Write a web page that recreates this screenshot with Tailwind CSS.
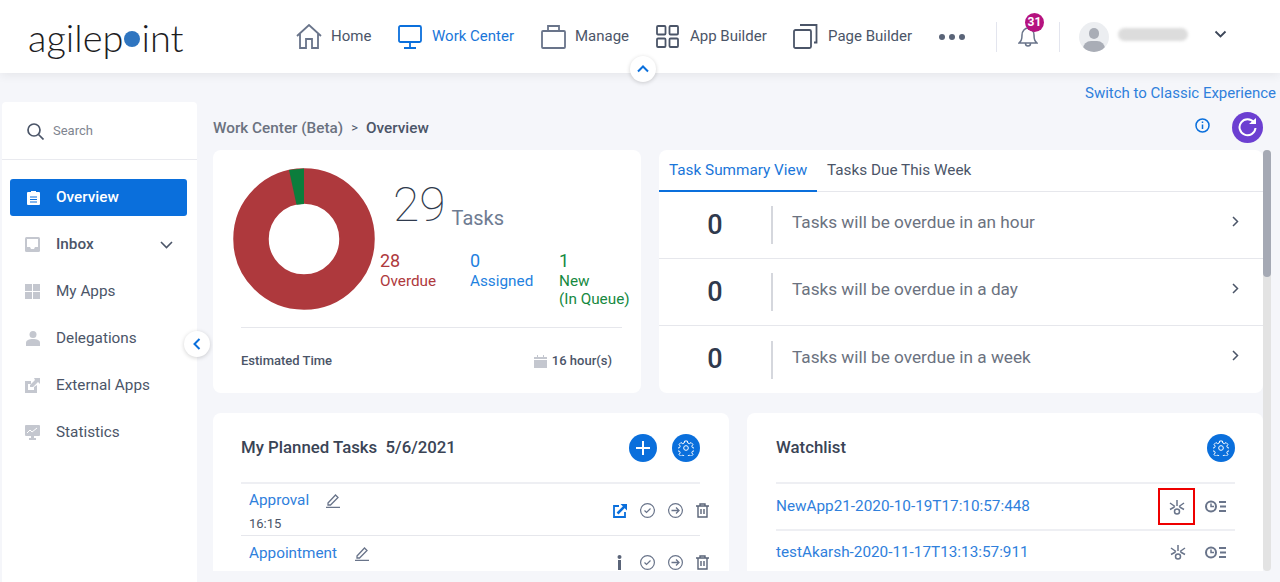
<!DOCTYPE html>
<html lang="en">
<head>
  <meta charset="UTF-8" />
  <title>Work Center</title>
  <script src="https://cdn.jsdelivr.net/npm/@tailwindcss/browser@4"></script>
</head>
<body class="bg-[#f5f6fa] h-[582px] overflow-hidden font-[Roboto,sans-serif] text-[#4b5568]">

  <!-- top nav -->
  <header class="relative h-[73px] bg-white shadow-[0_2px_10px_rgba(0,0,0,0.07)] flex items-center text-[15px]">
    <div class="ml-[28px] w-[268px] flex items-center font-['Lato',sans-serif] font-light text-[38px] leading-none text-[#1d1d1f]">
      <span>agilep</span><span class="w-[16px] h-[16px] rounded-full bg-[#2f75c0] mt-[5px] ml-[1px] mr-[1px]"></span><span>int</span>
    </div>
    <svg class="w-[26px] h-[25px] mr-[9px]" viewBox="0 0 26 25" fill="none" stroke="#69748a" stroke-width="1.8"><path d="M1 12 13 1l12 11M4 10v14h6v-9h6v9h6V10"/></svg>
    <span class="w-[67px]">Home</span>
    <svg class="w-[24px] h-[24px] mr-[10px]" viewBox="0 0 24 24" fill="none" stroke="#0a6fdc" stroke-width="1.8"><rect x="1" y="1" width="22" height="16" rx="1.5"/><path d="M12 17v5M6 23h12"/></svg>
    <span class="w-[109px] text-[#1a76d9]">Work Center</span>
    <svg class="w-[25px] h-[24px] mr-[9px]" viewBox="0 0 25 24" fill="none" stroke="#69748a" stroke-width="1.8"><rect x="1" y="6" width="23" height="17" rx="1"/><path d="M7 6V1h11v5"/></svg>
    <span class="w-[81px]">Manage</span>
    <svg class="w-[23px] h-[23px] mr-[11px]" viewBox="0 0 23 23" fill="none" stroke="#4b5568" stroke-width="1.8"><rect x="1" y="1" width="8.5" height="8.5" rx="1"/><rect x="13.5" y="1" width="8.5" height="8.5" rx="1"/><rect x="1" y="13.5" width="8.5" height="8.5" rx="1"/><rect x="13.5" y="13.5" width="8.5" height="8.5" rx="1"/></svg>
    <span class="w-[103px]">App Builder</span>
    <svg class="w-[25px] h-[25px] mr-[10px]" viewBox="0 0 25 25" fill="none" stroke="#4b5568" stroke-width="1.8"><rect x="1" y="6" width="17" height="18" rx="1.5"/><path d="M7 1h16.500v17.500H21"/></svg>
    <span class="w-[111px]">Page Builder</span>
    <div class="flex gap-[4px] w-[57px]">
      <span class="w-[6px] h-[6px] rounded-full bg-[#5a6478]"></span><span class="w-[6px] h-[6px] rounded-full bg-[#5a6478]"></span><span class="w-[6px] h-[6px] rounded-full bg-[#5a6478]"></span>
    </div>
    <div class="w-px h-[30px] bg-[#e3e5ee]"></div>
    <div class="relative w-[62px] h-[30px] flex justify-center items-end">
      <svg class="w-[20px] h-[24px] mb-[4px]" viewBox="0 0 20 24" fill="none" stroke="#69748a" stroke-width="1.5"><path d="M1 19c2-2 3-3 3-8 0-4 3-7 6-7s6 3 6 7c0 5 1 6 3 8zM7.500 19.500a2.500 2.500 0 0 0 5 0"/></svg>
      <span class="absolute left-[28px] -top-[9px] w-[19px] h-[19px] rounded-full bg-[#b5127f] text-white text-[12px] font-bold flex items-center justify-center">31</span>
    </div>
    <div class="w-px h-[30px] bg-[#e3e5ee]"></div>
    <div class="ml-[19px] w-[30px] h-[30px] rounded-full bg-[#eceef1] overflow-hidden relative">
      <span class="absolute left-[10px] top-[6px] w-[10px] h-[11px] rounded-full bg-[#a9adb6]"></span>
      <span class="absolute left-[4px] top-[19px] w-[22px] h-[16px] rounded-full bg-[#a9adb6]"></span>
    </div>
    <div class="ml-[9px] w-[70px] h-[13px] -mt-[5px] rounded-full bg-[#dcdcdc] blur-[1.5px]"></div>
    <svg class="ml-[26px] -mt-[5px] w-[13px] h-[9px]" viewBox="0 0 13 9" fill="none" stroke="#3c4658" stroke-width="1.8"><path d="m1.500 1.500 5 5 5-5"/></svg>
    <button class="absolute left-[630px] top-[56px] w-[26px] h-[26px] rounded-full bg-white shadow-[0_1px_4px_rgba(0,0,0,0.18)] flex items-center justify-center">
      <svg class="w-[12px] h-[8px]" viewBox="0 0 12 8" fill="none" stroke="#0a6fdc" stroke-width="2"><path d="m1 6.500 5-5 5 5"/></svg>
    </button>
  </header>

  <div class="h-[29px] flex items-center justify-end pr-[4px] pt-[12px] text-[15px] text-[#2f80dc]">Switch to Classic Experience</div>

  <div class="flex h-[480px]">
    <!-- sidebar -->
    <aside class="relative ml-[2px] w-[195px] bg-white rounded-t-[4px] text-[15.3px] shrink-0">
      <div class="h-[58px] border-b border-[#e9eaef] flex items-center pl-[25px] pt-[1px] gap-[9px]">
        <svg class="w-[17px] h-[17px]" viewBox="0 0 17 17" fill="none" stroke="#4b5568" stroke-width="1.7"><circle cx="7" cy="7" r="6"/><path d="m11.500 11.500 5 5"/></svg>
        <span class="text-[13px] text-[#808590]">Search</span>
      </div>
      <nav class="pt-[19px] pl-[8px] pr-[10px]">
        <a class="h-[37px] rounded-[3px] bg-[#0a6fdc] text-white font-medium flex items-center">
          <svg class="ml-[17px] mr-[16px] w-[13px] h-[15px]" viewBox="0 0 13 15"><path fill="#fff" d="M1 2h3V1h5v1h3a1 1 0 0 1 1 1v11a1 1 0 0 1-1 1H1a1 1 0 0 1-1-1V3a1 1 0 0 1 1-1z"/><path stroke="#0a6fdc" stroke-width="1.200" d="M3 7h7M3 9.500h7M3 12h7"/></svg>
          Overview
        </a>
        <a class="h-[47px] mt-[5px] flex items-center font-medium">
          <svg class="ml-[15px] mr-[16px] w-[15px] h-[15px]" viewBox="0 0 15 15"><rect width="15" height="15" rx="1.500" fill="#c4c7cf"/><path fill="#fff" d="M2 2h11v8h-3l-1 2H6l-1-2H2z"/></svg>
          Inbox
          <svg class="ml-[66px] w-[13px] h-[8px]" viewBox="0 0 13 8" fill="none" stroke="#4b5568" stroke-width="1.600"><path d="m1 1 5.500 5.500L12 1"/></svg>
        </a>
        <a class="h-[47px] flex items-center">
          <svg class="ml-[15px] mr-[16px] w-[15px] h-[15px]" viewBox="0 0 15 15" fill="#c4c7cf"><rect width="7" height="7"/><rect x="8" width="7" height="7"/><rect y="8" width="7" height="7"/><rect x="8" y="8" width="7" height="7"/></svg>
          My Apps
        </a>
        <a class="h-[47px] flex items-center">
          <svg class="ml-[16px] mr-[16px] w-[14px] h-[15px]" viewBox="0 0 14 15" fill="#c4c7cf"><circle cx="7" cy="3.500" r="3.500"/><path d="M0 15v-3c0-3 3-4 7-4s7 1 7 4v3z"/></svg>
          Delegations
        </a>
        <a class="h-[47px] flex items-center">
          <svg class="ml-[15px] mr-[16px] w-[15px] h-[15px]" viewBox="0 0 15 15" fill="#c4c7cf"><path d="M0 3h6v3H3v6h6V9l3-2v8H0z"/><path d="M9 0h6v6l-2-2-5 5H5V7l5-5z"/></svg>
          External Apps
        </a>
        <a class="h-[47px] flex items-center">
          <svg class="ml-[15px] mr-[16px] w-[15px] h-[15px]" viewBox="0 0 15 15"><rect width="15" height="11" rx="1" fill="#c4c7cf"/><path d="M6 11h3v2h2v2H4v-2h2z" fill="#c4c7cf"/><path d="m2 8 3-3 2 2 5-4" fill="none" stroke="#fff"/></svg>
          Statistics
        </a>
      </nav>
      <button class="absolute -right-[13px] top-[229px] w-[26px] h-[26px] rounded-full bg-white shadow-[0_1px_4px_rgba(0,0,0,0.18)] flex items-center justify-center">
        <svg class="w-[8px] h-[12px]" viewBox="0 0 8 12" fill="none" stroke="#0a6fdc" stroke-width="2"><path d="M6.500 1 1.500 6l5 5"/></svg>
      </button>
    </aside>

    <!-- main -->
    <main class="flex-1 min-w-0 pl-[16px]">
      <div class="h-[48px] flex items-center text-[15.3px]">
        <span class="mt-[4px] text-[#6b7280] font-medium">Work Center (Beta)</span>
        <span class="mt-[4px] mx-[8px] text-[13px] text-[#4b5568]">&gt;</span>
        <span class="mt-[4px] font-medium">Overview</span>
        <svg class="ml-auto mb-[2px] w-[15px] h-[15px]" viewBox="0 0 15 15" fill="none" stroke="#0a6fdc" stroke-width="1.500"><circle cx="7.500" cy="7.500" r="6.500"/><path d="M7.500 6.500v4.500M7.500 3.500v1.500"/></svg>
        <div class="ml-[22px] mr-[17px] mt-[2px] w-[31px] h-[31px] rounded-full bg-[#6c3fd1] flex items-center justify-center">
          <svg class="w-[19px] h-[19px]" viewBox="0 0 19 19" fill="none" stroke="#fff" stroke-width="2"><path d="M16 4.500A8 8 0 1 0 17.500 10"/><path fill="#fff" stroke="none" d="M11 6h7V0z"/></svg>
        </div>
      </div>

      <div class="flex h-[421px]">
        <div class="w-[1050px] shrink-0 overflow-hidden">
          <div class="flex gap-[18px] h-[243px]">
            <!-- tasks donut card -->
            <section class="w-[428px] bg-white rounded-[8px] px-[28px] relative">
              <div class="h-[177px] flex">
                <svg class="-ml-[8px] mt-[18px] w-[142px] h-[142px] shrink-0" viewBox="0 0 142 142">
                  <circle cx="71" cy="71" r="53" fill="none" stroke="#ae393d" stroke-width="35.500"/>
                  <path d="M71 .5V36L63.500 36.800 56 2z" fill="#0c7d3c"/>
                </svg>
                <div class="ml-[5px] flex-1">
                  <div class="pl-[13px] h-[100px] flex items-end pb-[21px]">
                    <span class="text-[48px] font-thin leading-none text-[#2f3a4d]">29</span>
                    <span class="ml-[6px] mb-[1px] text-[20px] leading-none text-[#6f7c92]">Tasks</span>
                  </div>
                  <div class="flex text-[15.3px] leading-[18px] whitespace-nowrap">
                    <div class="w-[90px] shrink-0 text-[#ae393d]"><div class="text-[18px] leading-[22px]">28</div>Overdue</div>
                    <div class="w-[89px] shrink-0 text-[#1f82e0]"><div class="text-[18px] leading-[22px]">0</div>Assigned</div>
                    <div class="shrink-0 text-[#16893f]"><div class="text-[18px] leading-[22px]">1</div>New<br>(In Queue)</div>
                  </div>
                </div>
              </div>
              <div class="mr-[-9px] border-t border-[#e6e7ec] h-[66px] flex items-center text-[13px] pr-[10px] pt-[1px]">
                <span class="font-medium">Estimated Time</span>
                <svg class="ml-auto mr-[5px] w-[13px] h-[13px]" viewBox="0 0 13 13" fill="#c4c7cf"><path d="M0 2h3V0h1v2h5V0h1v2h3v2H0zM0 5h13v8H0z"/></svg>
                <span class="font-medium">16 hour(s)</span>
              </div>
            </section>

            <!-- task summary card -->
            <section class="flex-1 bg-white rounded-[8px] overflow-hidden">
              <div class="h-[42px] border-b border-[#e6e7ec] flex text-[15.3px]">
                <span class="w-[158px] pl-[10px] h-[42px] flex items-center border-b-2 border-[#0a6fdc] text-[#1a76d9]">Task Summary View</span>
                <span class="pl-[10px] flex items-center">Tasks Due This Week</span>
              </div>
              <div class="h-[67px] border-b border-[#e6e7ec] flex items-center">
                <span class="w-[112px] text-center text-[27px] font-medium text-[#2f3a4d]">0</span>
                <span class="w-[2px] h-[38px] bg-[#d5d7dd]"></span>
                <span class="ml-[19px] -mt-[4px] text-[17.2px] text-[#6b7280]">Tasks will be overdue in an hour</span>
                <svg class="ml-auto mr-[24px] -mt-[8px] w-[7px] h-[11px]" viewBox="0 0 7 11" fill="none" stroke="#4b5568" stroke-width="1.500"><path d="m1 1 4.500 4.500L1 10"/></svg>
              </div>
              <div class="h-[67px] border-b border-[#e6e7ec] flex items-center">
                <span class="w-[112px] text-center text-[27px] font-medium text-[#2f3a4d]">0</span>
                <span class="w-[2px] h-[38px] bg-[#d5d7dd]"></span>
                <span class="ml-[19px] -mt-[4px] text-[17.2px] text-[#6b7280]">Tasks will be overdue in a day</span>
                <svg class="ml-auto mr-[24px] -mt-[8px] w-[7px] h-[11px]" viewBox="0 0 7 11" fill="none" stroke="#4b5568" stroke-width="1.500"><path d="m1 1 4.500 4.500L1 10"/></svg>
              </div>
              <div class="h-[67px] flex items-center">
                <span class="w-[112px] text-center text-[27px] font-medium text-[#2f3a4d]">0</span>
                <span class="w-[2px] h-[38px] bg-[#d5d7dd]"></span>
                <span class="ml-[19px] -mt-[4px] text-[17.2px] text-[#6b7280]">Tasks will be overdue in a week</span>
                <svg class="ml-auto mr-[24px] -mt-[8px] w-[7px] h-[11px]" viewBox="0 0 7 11" fill="none" stroke="#4b5568" stroke-width="1.500"><path d="m1 1 4.500 4.500L1 10"/></svg>
              </div>
            </section>
          </div>

          <div class="flex gap-[18px] mt-[20px] h-[158px]">
            <!-- planned tasks -->
            <section class="w-[516px] bg-white rounded-t-[8px] pl-[28px] pr-[29px]">
              <div class="h-[71px] border-b-2 border-[#eeeff3] flex items-center">
                <span class="text-[16.8px] font-medium text-[#3a4455] whitespace-pre">My Planned Tasks  5/6/2021</span>
                <span class="ml-auto w-[28px] h-[28px] rounded-full bg-[#0a6fdc] flex items-center justify-center">
                  <svg class="w-[14px] h-[14px]" viewBox="0 0 14 14" stroke="#fff" stroke-width="2"><path d="M7 0v14M0 7h14"/></svg>
                </span>
                <span class="ml-[15px] w-[28px] h-[28px] rounded-full bg-[#0a6fdc] flex items-center justify-center">
                  <svg class="w-[16px] h-[16px]" viewBox="0 0 24 24" fill="none" stroke="#fff" stroke-width="1.500"><circle cx="12" cy="12" r="3.500"/><path d="m10 1.500h4l.7 3 2.300 1 2.600-1.700 2.800 2.800-1.700 2.600 1 2.300 3 .7v4l-3 .7-1 2.300 1.700 2.600-2.800 2.800-2.600-1.700-2.300 1-.7 3h-4l-.7-3-2.300-1-2.600 1.700-2.800-2.800 1.700-2.600-1-2.300-3-.7v-4l3-.7 1-2.300-1.700-2.600 2.800-2.800 2.600 1.700 2.300-1z"/></svg>
                </span>
              </div>
              <div class="h-[52px] border-b border-[#e6e7ec] pl-[8px] flex">
                <div class="pt-[5px]">
                  <div class="flex items-center h-[22px] text-[15.3px] text-[#2f80dc]">Approval
                    <svg class="ml-[17px] w-[14px] h-[15px]" viewBox="0 0 14 15" fill="none" stroke="#69748a" stroke-width="1.300"><path d="M2 10 9.500 2l2.500 2.500L4.500 12H2zM0 14.300h14"/></svg>
                  </div>
                  <div class="mt-[4px] text-[13px] leading-[18px]">16:15</div>
                </div>
                <div class="ml-auto -mr-[9px] self-end pb-[17px] flex items-center gap-[13px]">
                  <svg class="w-[14px] h-[14px]" viewBox="0 0 14 14" fill="none" stroke="#0a6fdc" stroke-width="1.800"><path d="M6 2H1v11h11V8"/><path d="M4.500 9.500 12 2" stroke-width="2.500"/><path fill="#0a6fdc" stroke="none" d="M7.500 0H14v6.500z"/></svg>
                  <svg class="w-[15px] h-[15px]" viewBox="0 0 15 15" fill="none" stroke="#69748a" stroke-width="1.200"><circle cx="7.500" cy="7.500" r="6.900"/><path d="m4.500 7.500 2 2 4-4"/></svg>
                  <svg class="w-[15px] h-[15px]" viewBox="0 0 15 15" fill="none" stroke="#69748a" stroke-width="1.200"><circle cx="7.500" cy="7.500" r="6.900"/><path d="M3.500 7.500h7.500M8 4.500l3 3-3 3" stroke-width="1.300"/></svg>
                  <svg class="w-[13px] h-[15px]" viewBox="0 0 13 15" fill="none" stroke="#5a6478" stroke-width="1.400"><path d="M0 3h13M4 3V1h5v2M2 3v11h9V3M5 6v5M8 6v5"/></svg>
                </div>
              </div>
              <div class="pl-[8px] pt-[6px] flex">
                <div class="flex items-center h-[22px] text-[15.3px] text-[#2f80dc]">Appointment
                  <svg class="ml-[18px] w-[14px] h-[15px]" viewBox="0 0 14 15" fill="none" stroke="#69748a" stroke-width="1.300"><path d="M2 10 9.500 2l2.500 2.500L4.500 12H2zM0 14.300h14"/></svg>
                </div>
                <div class="ml-auto -mr-[9px] mt-[13px] h-[15px] flex items-center gap-[13px] self-start">
                  <svg class="w-[5px] h-[15px] mr-[5px]" viewBox="0 0 5 15" fill="#5a6478"><circle cx="2.500" cy="2" r="2"/><rect x="1" y="5" width="3" height="10"/></svg>
                  <svg class="w-[15px] h-[15px]" viewBox="0 0 15 15" fill="none" stroke="#69748a" stroke-width="1.200"><circle cx="7.500" cy="7.500" r="6.900"/><path d="m4.500 7.500 2 2 4-4"/></svg>
                  <svg class="w-[15px] h-[15px]" viewBox="0 0 15 15" fill="none" stroke="#69748a" stroke-width="1.200"><circle cx="7.500" cy="7.500" r="6.900"/><path d="M3.500 7.500h7.500M8 4.500l3 3-3 3" stroke-width="1.300"/></svg>
                  <svg class="w-[13px] h-[15px]" viewBox="0 0 13 15" fill="none" stroke="#5a6478" stroke-width="1.400"><path d="M0 3h13M4 3V1h5v2M2 3v11h9V3M5 6v5M8 6v5"/></svg>
                </div>
              </div>
            </section>

            <!-- watchlist -->
            <section class="flex-1 bg-white rounded-t-[8px] pl-[29px] pr-[28px] overflow-hidden">
              <div class="h-[71px] border-b-2 border-[#eeeff3] flex items-center">
                <span class="text-[16.8px] font-medium text-[#3a4455]">Watchlist</span>
                <span class="ml-auto w-[28px] h-[28px] rounded-full bg-[#0a6fdc] flex items-center justify-center">
                  <svg class="w-[16px] h-[16px]" viewBox="0 0 24 24" fill="none" stroke="#fff" stroke-width="1.500"><circle cx="12" cy="12" r="3.500"/><path d="m10 1.500h4l.7 3 2.300 1 2.600-1.700 2.800 2.800-1.700 2.600 1 2.300 3 .7v4l-3 .7-1 2.300 1.700 2.600-2.800 2.800-2.600-1.700-2.300 1-.7 3h-4l-.7-3-2.300-1-2.600 1.700-2.800-2.800 1.700-2.600-1-2.300-3-.7v-4l3-.7 1-2.300-1.700-2.600 2.800-2.800 2.600 1.700 2.300-1z"/></svg>
                </span>
              </div>
              <div class="h-[47px] border-b-2 border-[#eeeff3] flex items-center text-[15.3px] text-[#2f80dc]">
                <span>NewApp21-2020-10-19T17:10:57:448</span>
                <span class="ml-auto w-[37px] h-[37px] border-2 border-[#ee0000] flex items-center justify-center">
                  <svg class="mt-[2px] w-[16px] h-[15px]" viewBox="0 0 16 15" fill="none" stroke="#69748a" stroke-width="1.500"><path d="M1 3l5 3.500M15 3l-5 3.500M1 9.500 5.500 7M15 9.500 10.500 7M8 0v6"/><circle cx="8" cy="11.500" r="2.500"/></svg>
                </span>
                <svg class="ml-[10px] mr-[9px] w-[21px] h-[13px]" viewBox="0 0 21 13" fill="none" stroke="#69748a" stroke-width="2"><circle cx="6" cy="6.500" r="5"/><path d="M6 3.500v3h3" stroke-width="1.500"/><path d="M14 2h7M15 6.500h6M14 11h7"/></svg>
              </div>
              <div class="h-[41px] pt-[1px] flex items-center text-[15.3px] text-[#2f80dc]">
                <span>testAkarsh-2020-11-17T13:13:57:911</span>
                <svg class="ml-auto w-[16px] h-[15px]" viewBox="0 0 16 15" fill="none" stroke="#69748a" stroke-width="1.500"><path d="M1 3l5 3.500M15 3l-5 3.500M1 9.500 5.500 7M15 9.500 10.500 7M8 0v6"/><circle cx="8" cy="11.500" r="2.500"/></svg>
                <svg class="ml-[19px] mr-[9px] w-[21px] h-[13px]" viewBox="0 0 21 13" fill="none" stroke="#69748a" stroke-width="2"><circle cx="6" cy="6.500" r="5"/><path d="M6 3.500v3h3" stroke-width="1.500"/><path d="M14 2h7M15 6.500h6M14 11h7"/></svg>
              </div>
            </section>
          </div>
        </div>
        <!-- scrollbar -->
        <div class="w-[8px] h-[421px] bg-[#e3e3e3] rounded-[4px]">
          <div class="w-[8px] h-[127px] rounded-[4px] bg-[#a5a9b4]"></div>
        </div>
      </div>
    </main>
  </div>
</body>
</html>
